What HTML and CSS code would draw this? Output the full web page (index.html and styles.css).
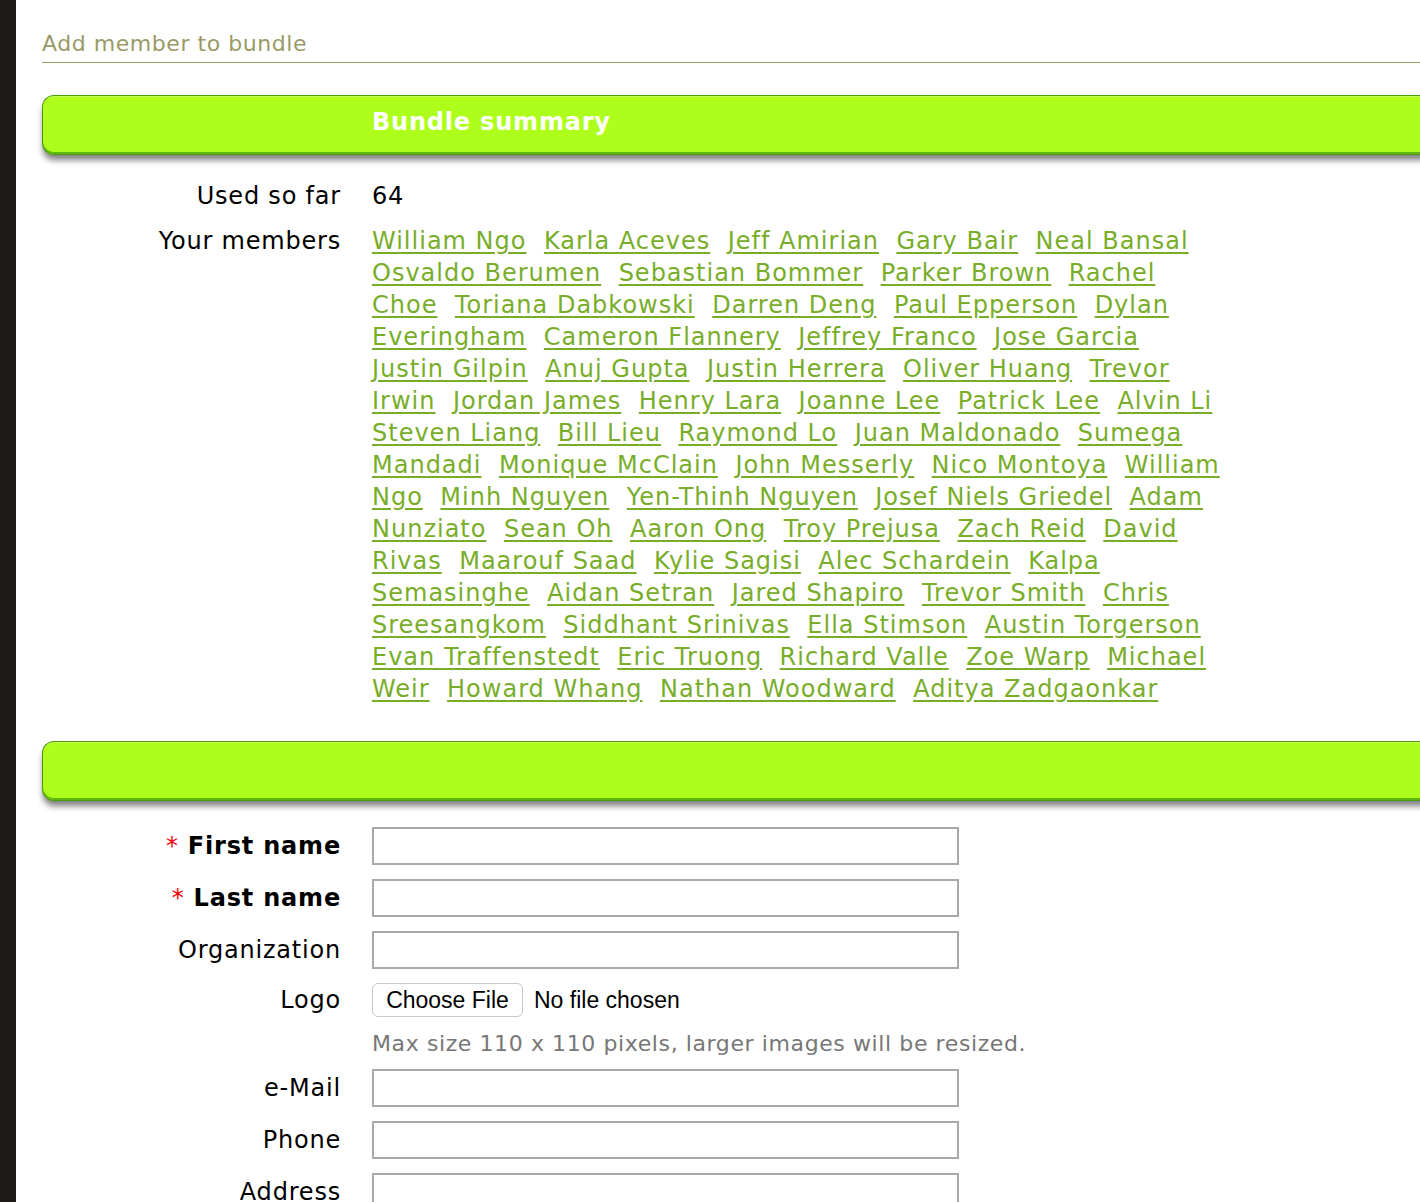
FILE: index.html
```html
<!DOCTYPE html>
<html>
<head>
<meta charset="utf-8">
<title>Add member to bundle</title>
<link rel="stylesheet" href="styles.css">
</head>
<body>
<div class="page">
  <h2 class="title">Add member to bundle</h2>

  <div class="bar"><span class="bar-title">Bundle summary</span></div>

  <div class="summary">
    <div class="row">
      <div class="label">Used so far</div>
      <div class="value">64</div>
    </div>
    <div class="row">
      <div class="label">Your members</div>
      <div class="value members">
        <a href="#">William Ngo</a> <a href="#">Karla Aceves</a> <a href="#">Jeff Amirian</a> <a href="#">Gary Bair</a> <a href="#">Neal Bansal</a> <a href="#">Osvaldo Berumen</a> <a href="#">Sebastian Bommer</a> <a href="#">Parker Brown</a> <a href="#">Rachel Choe</a> <a href="#">Toriana Dabkowski</a> <a href="#">Darren Deng</a> <a href="#">Paul Epperson</a> <a href="#">Dylan Everingham</a> <a href="#">Cameron Flannery</a> <a href="#">Jeffrey Franco</a> <a href="#">Jose Garcia</a> <a href="#">Justin Gilpin</a> <a href="#">Anuj Gupta</a> <a href="#">Justin Herrera</a> <a href="#">Oliver Huang</a> <a href="#">Trevor Irwin</a> <a href="#">Jordan James</a> <a href="#">Henry Lara</a> <a href="#">Joanne Lee</a> <a href="#">Patrick Lee</a> <a href="#">Alvin Li</a> <a href="#">Steven Liang</a> <a href="#">Bill Lieu</a> <a href="#">Raymond Lo</a> <a href="#">Juan Maldonado</a> <a href="#">Sumega Mandadi</a> <a href="#">Monique McClain</a> <a href="#">John Messerly</a> <a href="#">Nico Montoya</a> <a href="#">William Ngo</a> <a href="#">Minh Nguyen</a> <a href="#">Yen-Thinh Nguyen</a> <a href="#">Josef Niels Griedel</a> <a href="#">Adam Nunziato</a> <a href="#">Sean Oh</a> <a href="#">Aaron Ong</a> <a href="#">Troy Prejusa</a> <a href="#">Zach Reid</a> <a href="#">David Rivas</a> <a href="#">Maarouf Saad</a> <a href="#">Kylie Sagisi</a> <a href="#">Alec Schardein</a> <a href="#">Kalpa Semasinghe</a> <a href="#">Aidan Setran</a> <a href="#">Jared Shapiro</a> <a href="#">Trevor Smith</a> <a href="#">Chris Sreesangkom</a> <a href="#">Siddhant Srinivas</a> <a href="#">Ella Stimson</a> <a href="#">Austin Torgerson</a> <a href="#">Evan Traffenstedt</a> <a href="#">Eric Truong</a> <a href="#">Richard Valle</a> <a href="#">Zoe Warp</a> <a href="#">Michael Weir</a> <a href="#">Howard Whang</a> <a href="#">Nathan Woodward</a> <a href="#">Aditya Zadgaonkar</a>
      </div>
    </div>
  </div>

  <div class="bar bar-form"></div>

  <form class="form">
    <div class="frow">
      <label class="flabel req"><span class="star">*</span> First name</label>
      <div class="fvalue"><input class="text" type="text"></div>
    </div>
    <div class="frow">
      <label class="flabel req"><span class="star">*</span> Last name</label>
      <div class="fvalue"><input class="text" type="text"></div>
    </div>
    <div class="frow">
      <label class="flabel">Organization</label>
      <div class="fvalue"><input class="text" type="text"></div>
    </div>
    <div class="frow">
      <label class="flabel logo">Logo</label>
      <div class="fvalue">
        <input class="file" type="file">
        <div class="hint">Max size 110 x 110 pixels, larger images will be resized.</div>
      </div>
    </div>
    <div class="frow">
      <label class="flabel">e-Mail</label>
      <div class="fvalue"><input class="text" type="text"></div>
    </div>
    <div class="frow">
      <label class="flabel">Phone</label>
      <div class="fvalue"><input class="text" type="text"></div>
    </div>
    <div class="frow">
      <label class="flabel">Address</label>
      <div class="fvalue"><input class="text" type="text"></div>
    </div>
  </form>
</div>
</body>
</html>
```

FILE: styles.css
```css
html, body {
  margin: 0;
  padding: 0;
  overflow: hidden;
}
body {
  background: #1b1a19;
  font-family: "DejaVu Sans", Verdana, sans-serif;
  font-size: 24px;
  letter-spacing: 0.8px;
  color: #000;
}
.page {
  margin-left: 16px;
  background: #fff;
  padding: 29px 0 60px 26px;
  width: 1460px;
  min-height: 1300px;
}
.title {
  margin: 0;
  font-size: 22px;
  font-weight: normal;
  letter-spacing: 0.55px;
  line-height: 30px;
  color: #999a66;
  padding-bottom: 3px;
  border-bottom: 1px solid #999a66;
}
.bar {
  margin-top: 32px;
  border: 1px solid #4a9c0c;
  border-right: none;
  border-radius: 12px 0 0 12px;
  background: #adff1b;
  box-shadow: inset 0 1px 0 #c6ff5a, inset 0 -2px 0 #5fb512, 0 6px 6px -1px rgba(0,0,0,0.5);
  display: flex;
  align-items: center;
  padding-left: 329px;
  padding-bottom: 6px;
  box-sizing: content-box;
  height: 52px;
}
.bar-form {
  margin-top: 36px;
}
.bar-title {
  color: #fff;
  font-weight: bold;
  font-size: 24px;
}
.summary {
  margin-top: 25px;
  display: flex;
  flex-direction: column;
  gap: 13px;
}
.row {
  display: grid;
  grid-template-columns: 299px 854px;
  column-gap: 31px;
  line-height: 32px;
}
.label {
  text-align: right;
}
.members a {
  color: #78ad29;
  letter-spacing: 1px;
  text-decoration: underline;
  text-underline-offset: 3px;
  margin-right: 9px;
}
.form {
  margin-top: 26px;
  display: flex;
  flex-direction: column;
  gap: 14px;
}
.frow {
  display: grid;
  grid-template-columns: 299px 900px;
  column-gap: 31px;
  align-items: start;
}
.flabel {
  text-align: right;
  line-height: 38px;
}
.flabel.req {
  font-weight: bold;
}
.flabel.logo {
  line-height: 34px;
}
.star {
  color: #f00;
  font-weight: normal;
}
.text {
  display: block;
  box-sizing: border-box;
  width: 587px;
  height: 38px;
  border: 2px solid #a9a9a9;
  margin: 0;
  padding: 2px 6px;
  font: inherit;
  background: #fff;
}
.file {
  display: block;
  font: 23px "Liberation Sans", Arial, sans-serif;
  letter-spacing: 0;
  color: #000;
  height: 34px;
  margin: 0;
}
.file::file-selector-button {
  font: inherit;
  height: 34px;
  width: 151px;
  padding: 0;
  margin: 0 11px 0 0;
  border: 1px solid #c9c9c9;
  border-radius: 6px;
  background: #fff;
  color: #000;
}
.hint {
  margin-top: 15px;
  margin-bottom: -1px;
  line-height: 24px;
  color: #777;
  font-size: 22px;
  letter-spacing: 0.6px;
  white-space: nowrap;
}
```
